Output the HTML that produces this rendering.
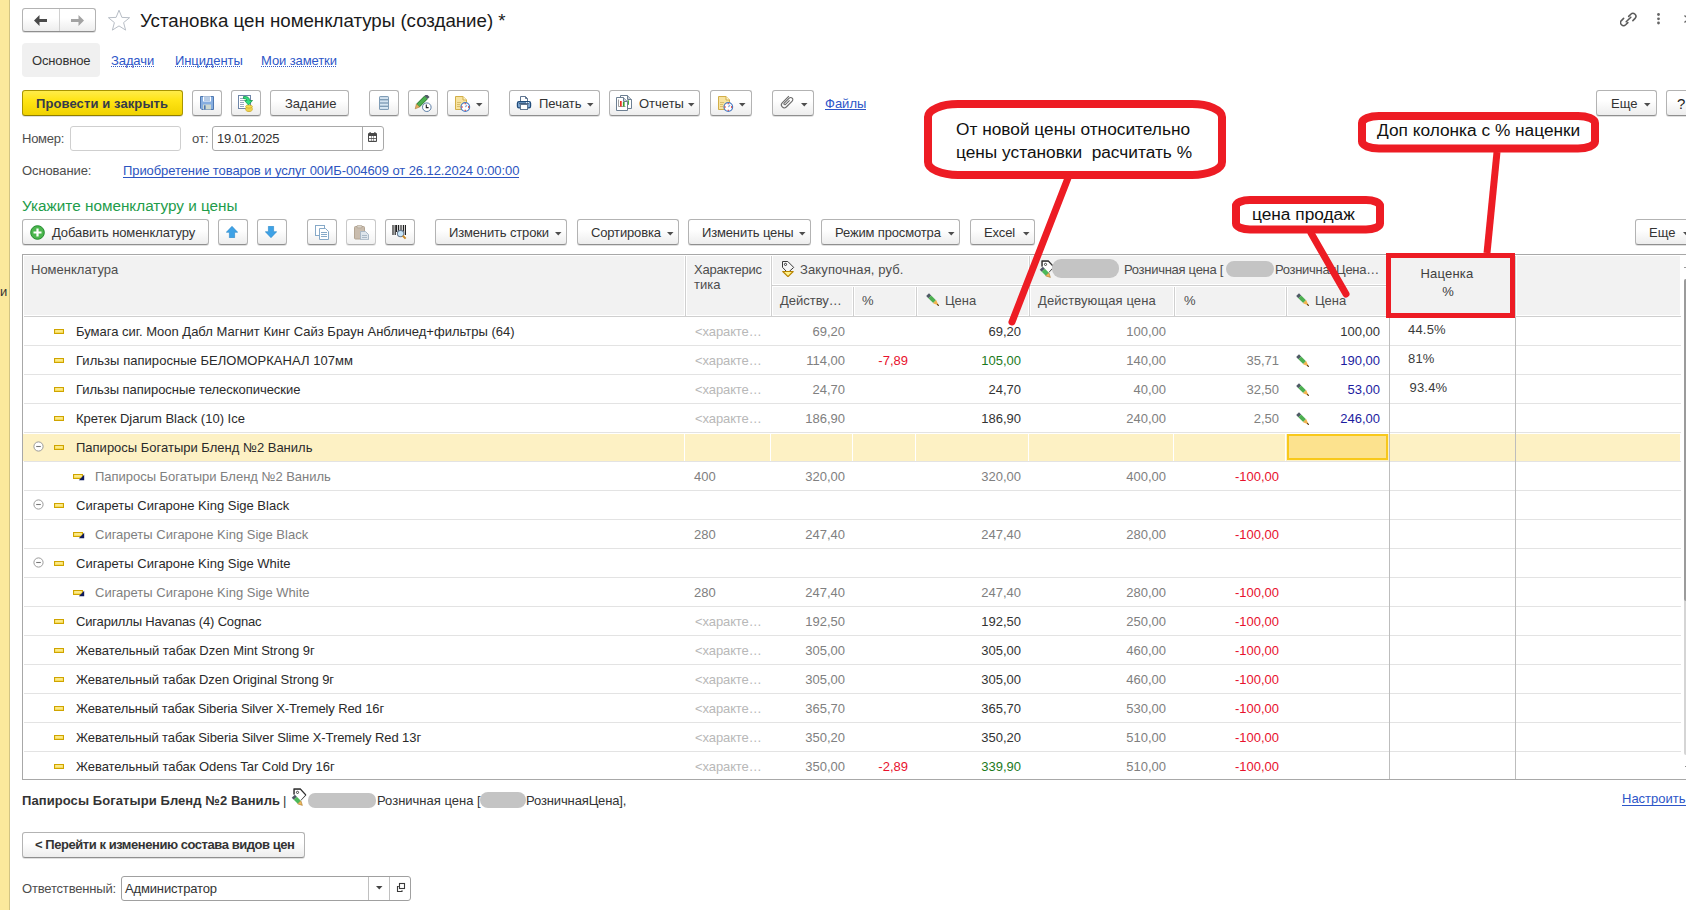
<!DOCTYPE html><html><head><meta charset="utf-8"><title>Установка цен номенклатуры</title>
<style>
*{margin:0;padding:0;box-sizing:border-box}
html,body{width:1686px;height:910px;overflow:hidden;background:#fff}
body{position:relative;font-family:"Liberation Sans", sans-serif;font-size:13px;color:#333}
.t{position:absolute;white-space:nowrap}
.btn{position:absolute;border:1px solid #b3b3b3;border-bottom-color:#8f8f8f;border-radius:3px;background:linear-gradient(to bottom,#ffffff 0%,#ffffff 40%,#ededed 100%);box-shadow:0 1px 0 rgba(0,0,0,.12)}
.lnk{color:#2d56c8}
</style></head><body>
<div style="position:absolute;left:0px;top:0px;width:9px;height:910px;background:#fbe99c"></div>
<div style="position:absolute;left:9px;top:0px;width:1px;height:910px;background:#d2c483"></div>
<div class="t" style="left:0px;top:282px;font-size:13px;color:#333;font-weight:400;line-height:20px;">и</div>
<div class="btn" style="left:22px;top:8px;width:74px;height:24px"></div>
<div style="position:absolute;left:59px;top:9px;width:1px;height:22px;background:#d0d0d0"></div>
<svg style="position:absolute;left:34px;top:15px" width="15" height="11" viewBox="0 0 15 11"><path d="M0 5.5L5.5 0V4H13V7H5.5V11Z" fill="#4a4a4a"/></svg>
<svg style="position:absolute;left:70px;top:15px" width="15" height="11" viewBox="0 0 15 11"><path d="M14 5.5L8.5 0V4H1V7H8.5V11Z" fill="#a3a3a3"/></svg>
<svg style="position:absolute;left:107px;top:9px" width="24" height="23" viewBox="0 0 24 23"><path d="M12 1.2L14.9 8.4L22.6 8.7L16.6 13.6L18.6 21.1L12 16.9L5.4 21.1L7.4 13.6L1.4 8.7L9.1 8.4Z" fill="none" stroke="#b8bec6" stroke-width="1"/></svg>
<div class="t" style="left:140px;top:11px;font-size:18.7px;color:#1a1a1a;font-weight:400;line-height:20px;">Установка цен номенклатуры (создание) *</div>
<svg style="position:absolute;left:1620px;top:11px" width="17" height="17" viewBox="0 0 16.5 16.5"><g fill="none" stroke="#5a5a5a" stroke-width="1.5" stroke-linecap="round"><path d="M8.4 5.2L10.5 3.1A2.9 2.9 0 0 1 14.6 7.2L12.5 9.3"/><path d="M7.6 11.3L5.5 13.4A2.9 2.9 0 0 1 1.4 9.3L3.5 7.2"/><path d="M6 10.5L10.5 6"/></g></svg>
<svg style="position:absolute;left:1655px;top:12px" width="7" height="16" viewBox="0 0 7 16"><circle cx="3.5" cy="2.5" r="1.4" fill="#666"/><circle cx="3.5" cy="6.8" r="1.4" fill="#666"/><circle cx="3.5" cy="11" r="1.4" fill="#666"/></svg>
<svg style="position:absolute;left:1684px;top:13px" width="2" height="12" viewBox="0 0 2 12"><path d="M0.5 2.5L2 4M0.5 9.5L2 8" stroke="#666" stroke-width="1.4"/></svg>
<div style="position:absolute;left:22px;top:43px;width:78px;height:34px;background:#f0f0f0;border-radius:4px"></div>
<div class="t" style="left:32px;top:51px;font-size:13px;color:#333;font-weight:400;line-height:20px;letter-spacing:-0.15px">Основное</div>
<div class="t" style="left:111px;top:51px;font-size:13px;color:#2d56c8;font-weight:400;line-height:20px;letter-spacing:-0.1px">Задачи</div>
<div style="position:absolute;left:111px;top:66px;width:44px;height:1px;background:repeating-linear-gradient(to right,#3a5fc8 0 1px,transparent 1px 2px)"></div>
<div class="t" style="left:175px;top:51px;font-size:13px;color:#2d56c8;font-weight:400;line-height:20px;letter-spacing:-0.1px">Инциденты</div>
<div style="position:absolute;left:175px;top:66px;width:66px;height:1px;background:repeating-linear-gradient(to right,#3a5fc8 0 1px,transparent 1px 2px)"></div>
<div class="t" style="left:261px;top:51px;font-size:13px;color:#2d56c8;font-weight:400;line-height:20px;letter-spacing:-0.1px">Мои заметки</div>
<div style="position:absolute;left:261px;top:66px;width:76px;height:1px;background:repeating-linear-gradient(to right,#3a5fc8 0 1px,transparent 1px 2px)"></div>
<div style="position:absolute;left:22px;top:90px;width:161px;height:26px;border:1px solid #a99500;border-bottom-color:#8f7e00;border-radius:3px;background:linear-gradient(to bottom,#ffec4a 0%,#ffe414 40%,#f0d200 100%);box-shadow:0 1px 0 rgba(0,0,0,.12)"></div>
<div class="t" style="left:36px;top:94px;font-size:13px;color:#363a4a;font-weight:700;line-height:20px;letter-spacing:0.1px">Провести и закрыть</div>
<div class="btn" style="left:192px;top:90px;width:30px;height:26px;"></div>
<svg style="position:absolute;left:200px;top:96px" width="14" height="14" viewBox="0 0 14 14"><path d="M0.5 0.5H13.5V13.5H1.8L0.5 12.2Z" fill="#86aee0" stroke="#4f78b0"/><rect x="3" y="0.5" width="8" height="5" fill="#fff"/><path d="M4 2H10M4 4H10" stroke="#6f98cc" stroke-width="1"/><rect x="3" y="8.5" width="8" height="5" fill="#cdd8d0"/><rect x="4" y="9.3" width="1.6" height="4.2" fill="#4f78b0"/></svg>
<div class="btn" style="left:231px;top:90px;width:30px;height:26px;"></div>
<svg style="position:absolute;left:237px;top:94px" width="18" height="18" viewBox="0 0 18 18"><rect x="1.5" y="1.5" width="12" height="13" fill="#fff" stroke="#6f86a8"/><path d="M3 4.5H8M3 6.5H7M3 8.5H7M3 10.5H7M3 12.5H7" stroke="#9aa8bf" stroke-width="1"/><ellipse cx="12" cy="15" rx="3.4" ry="2.6" fill="#e6c32e" stroke="#c09a10" stroke-width="0.6"/><path d="M8.8 14.2H15.2M8.8 16H15.2" stroke="#fff08a" stroke-width="0.7"/><ellipse cx="12" cy="12.6" rx="3.4" ry="1.6" fill="#f4dc50" stroke="#c09a10" stroke-width="0.6"/><path d="M6.5 2.5Q12.5 2 12.5 6.5H15.5L11.5 11L7.5 6.5H10Q10 4.5 6.5 4.5Z" fill="#2fe07e" stroke="#14944a" stroke-width="0.8"/></svg>
<div class="btn" style="left:270px;top:90px;width:79px;height:26px;"></div>
<div class="t" style="left:285px;top:94px;font-size:13px;color:#333;font-weight:400;line-height:20px;">Задание</div>
<div class="btn" style="left:369px;top:90px;width:30px;height:26px;"></div>
<svg style="position:absolute;left:379px;top:96px" width="10" height="14" viewBox="0 0 10 14"><rect x="0" y="0" width="10" height="14" rx="1.6" fill="#809db6"/><rect x="1" y="1.1" width="8" height="1.9" fill="#d3e3f0"/><rect x="1" y="4.4" width="8" height="1.9" fill="#d3e3f0"/><rect x="1" y="7.7" width="8" height="1.9" fill="#d6e6f2"/><rect x="1" y="11" width="8" height="1.9" fill="#d8e8f4"/></svg>
<div class="btn" style="left:408px;top:90px;width:30px;height:26px;"></div>
<svg style="position:absolute;left:414px;top:95px" width="18" height="18" viewBox="0 0 18 18"><path d="M4 10.5L12 2.5" stroke="#2f7a33" stroke-width="4.6"/><path d="M4 10.5L12 2.5" stroke="#4cb050" stroke-width="3.2"/><path d="M12 2.5L14 0.5" stroke="#4f5a66" stroke-width="4.4"/><path d="M2.4 8.9L5.6 12.1L1.2 13.8Z" fill="#e8b060" stroke="#9a6a20" stroke-width="0.5"/><circle cx="12.8" cy="12.2" r="4.3" fill="#fff" stroke="#5b7ea6" stroke-width="1"/><path d="M12.3 9.6V12.6H14.6" fill="none" stroke="#222" stroke-width="1.1"/></svg>
<div class="btn" style="left:447px;top:90px;width:42px;height:26px;"></div>
<svg style="position:absolute;left:453px;top:95px" width="18" height="18" viewBox="0 0 18 18"><path d="M2.5 1.5H10L13.5 5V14.5H2.5Z" fill="#f7e3a0" stroke="#d2ae48"/><path d="M10 1.5V5H13.5" fill="#fff6d0" stroke="#d2ae48"/><path d="M4 7.5H8M4 9.5H7M4 11.5H7" stroke="#d9bd6a"/><circle cx="12.3" cy="12" r="4.3" fill="#fff" stroke="#4a7cc4" stroke-width="1.2"/><path d="M12.3 8.2V9.3M12.3 14.7V15.8M8.5 12H9.6M15 12H16.1" stroke="#e02a2a" stroke-width="1.3"/><path d="M12.3 12L14 10" stroke="#8aaee0" stroke-width="1.2"/></svg>
<svg style="position:absolute;left:476px;top:103px" width="7" height="4" viewBox="0 0 7 4"><path d="M0 0H6.5L3.25 3.5Z" fill="#4d4d4d"/></svg>
<div class="btn" style="left:509px;top:90px;width:91px;height:26px;"></div>
<svg style="position:absolute;left:516px;top:95px" width="16" height="16" viewBox="0 0 16 16"><path d="M4.5 1.5H9.5L11.5 3.5V6.5H4.5Z" fill="#fff" stroke="#5f7590"/><path d="M9.5 1.5V3.5H11.5" fill="none" stroke="#5f7590"/><rect x="1.4" y="6.6" width="13.2" height="6.2" rx="1.6" fill="#7ba3cd" stroke="#1f4b7a" stroke-width="1.2"/><path d="M3 8.6H13" stroke="#3d5a7a"/><circle cx="10.6" cy="7.6" r="0.6" fill="#fff"/><circle cx="12.6" cy="7.6" r="0.6" fill="#fff"/><rect x="4.5" y="9.5" width="7" height="5" fill="#fff" stroke="#5f7590"/></svg>
<div class="t" style="left:539px;top:94px;font-size:13px;color:#333;font-weight:400;line-height:20px;">Печать</div>
<svg style="position:absolute;left:587px;top:103px" width="7" height="4" viewBox="0 0 7 4"><path d="M0 0H6.5L3.25 3.5Z" fill="#4d4d4d"/></svg>
<div class="btn" style="left:609px;top:90px;width:91px;height:26px;"></div>
<svg style="position:absolute;left:615px;top:94px" width="18" height="18" viewBox="0 0 18 18"><path d="M5.5 1.5H12.5L16.5 5.5V14.5H5.5Z" fill="#fff" stroke="#6d7f92"/><path d="M12.5 1.5V5.5H16.5" fill="#c8d0d8" stroke="#6d7f92"/><rect x="12.3" y="6.3" width="1.6" height="4.5" fill="#3aa030"/><path d="M1.5 3.5H8.5L12.5 7.5V16.5H1.5Z" fill="#fff" stroke="#6d7f92"/><path d="M8.5 3.5V7.5H12.5" fill="#c8d0d8" stroke="#6d7f92"/><path d="M3.5 5.5V12.5H10.5" fill="none" stroke="#888" stroke-width="0.8"/><rect x="5" y="7" width="1.7" height="5.5" fill="#e83020"/><rect x="7.9" y="8" width="1.7" height="4.5" fill="#3aa030"/></svg>
<div class="t" style="left:639px;top:94px;font-size:13px;color:#333;font-weight:400;line-height:20px;">Отчеты</div>
<svg style="position:absolute;left:688px;top:103px" width="7" height="4" viewBox="0 0 7 4"><path d="M0 0H6.5L3.25 3.5Z" fill="#4d4d4d"/></svg>
<div class="btn" style="left:710px;top:90px;width:42px;height:26px;"></div>
<svg style="position:absolute;left:716px;top:95px" width="18" height="18" viewBox="0 0 18 18"><path d="M2.5 1.5H10L13.5 5V14.5H2.5Z" fill="#f7e3a0" stroke="#d2ae48"/><path d="M10 1.5V5H13.5" fill="#fff6d0" stroke="#d2ae48"/><path d="M4 7.5H8M4 9.5H7M4 11.5H7" stroke="#d9bd6a"/><circle cx="12.3" cy="12" r="4.3" fill="#fff" stroke="#4a7cc4" stroke-width="1.2"/><path d="M12.3 8.2V9.3M12.3 14.7V15.8M8.5 12H9.6M15 12H16.1" stroke="#e02a2a" stroke-width="1.3"/><path d="M12.3 12L14 10" stroke="#8aaee0" stroke-width="1.2"/></svg>
<svg style="position:absolute;left:739px;top:103px" width="7" height="4" viewBox="0 0 7 4"><path d="M0 0H6.5L3.25 3.5Z" fill="#4d4d4d"/></svg>
<div class="btn" style="left:772px;top:90px;width:42px;height:26px;"></div>
<svg style="position:absolute;left:779px;top:94px" width="16" height="16" viewBox="0 0 16 16"><path d="M9.9 2.2L3.2 8.9A2.9 2.9 0 0 0 7.3 13L13.2 7.1A2.1 2.1 0 0 0 10.2 4.1L5 9.3A0.95 0.95 0 0 0 6.3 10.6L10.6 6.3" fill="none" stroke="#6a6a6a" stroke-width="1.1"/></svg>
<svg style="position:absolute;left:801px;top:103px" width="7" height="4" viewBox="0 0 7 4"><path d="M0 0H6.5L3.25 3.5Z" fill="#4d4d4d"/></svg>
<div class="t" style="left:825px;top:94px;font-size:13px;color:#2d56c8;font-weight:400;line-height:20px;">Файлы</div>
<div style="position:absolute;left:825px;top:109px;width:41px;height:1px;background:#2d56c8"></div>
<div class="btn" style="left:1596px;top:90px;width:61px;height:26px;"></div>
<div class="t" style="left:1611px;top:94px;font-size:13px;color:#333;font-weight:400;line-height:20px;">Еще</div>
<svg style="position:absolute;left:1644px;top:103px" width="7" height="4" viewBox="0 0 7 4"><path d="M0 0H6.5L3.25 3.5Z" fill="#4d4d4d"/></svg>
<div class="btn" style="left:1666px;top:90px;width:34px;height:26px;"></div>
<div class="t" style="left:1677px;top:94px;font-size:15px;color:#222;font-weight:400;line-height:20px;">?</div>
<div class="t" style="left:22px;top:129px;font-size:13px;color:#4d4d4d;font-weight:400;line-height:20px;letter-spacing:-0.25px">Номер:</div>
<div style="position:absolute;left:70px;top:126px;width:111px;height:25px;border:1px solid #cfcfcf;border-radius:3px;background:#fff"></div>
<div class="t" style="left:192px;top:129px;font-size:13px;color:#4d4d4d;font-weight:400;line-height:20px;">от:</div>
<div style="position:absolute;left:212px;top:126px;width:172px;height:25px;border:1px solid #a9a9a9;border-radius:3px;background:#fff"></div>
<div style="position:absolute;left:362px;top:127px;width:1px;height:23px;background:#a9a9a9"></div>
<div class="t" style="left:217px;top:129px;font-size:13px;color:#333;font-weight:400;line-height:20px;letter-spacing:-0.3px">19.01.2025</div>
<svg style="position:absolute;left:368px;top:132px" width="9" height="10" viewBox="0 0 9 10"><rect x="0" y="1" width="9" height="9" rx="1" fill="#4a4a4a"/><rect x="1.5" y="0" width="1.2" height="2.2" fill="#4a4a4a"/><rect x="6.3" y="0" width="1.2" height="2.2" fill="#4a4a4a"/><rect x="1" y="4" width="2" height="2" fill="#fff"/><rect x="3.5" y="4" width="2" height="2" fill="#fff"/><rect x="6" y="4" width="2" height="2" fill="#fff"/><rect x="1" y="6.8" width="2" height="2" fill="#fff"/><rect x="3.5" y="6.8" width="2" height="2" fill="#fff"/><rect x="6" y="6.8" width="2" height="2" fill="#fff"/></svg>
<div class="t" style="left:22px;top:161px;font-size:13px;color:#4d4d4d;font-weight:400;line-height:20px;letter-spacing:-0.1px">Основание:</div>
<div class="t" style="left:123px;top:161px;font-size:13px;color:#2d55c0;font-weight:400;line-height:20px;letter-spacing:-0.08px">Приобретение товаров и услуг 00ИБ-004609 от 26.12.2024 0:00:00</div>
<div style="position:absolute;left:123px;top:177px;width:396px;height:1px;background:#2d55c0"></div>
<div class="t" style="left:22px;top:196px;font-size:15.3px;color:#1e9c4a;font-weight:400;line-height:20px;letter-spacing:0">Укажите номенклатуру и цены</div>
<div class="btn" style="left:22px;top:219px;width:187px;height:26px;"></div>
<svg style="position:absolute;left:30px;top:225px" width="15" height="15" viewBox="0 0 15 15"><circle cx="7.5" cy="7.5" r="6.8" fill="#4cb64e" stroke="#1e8a2a" stroke-width="1"/><path d="M7.5 3.5V11.5M3.5 7.5H11.5" stroke="#fff" stroke-width="2.2"/></svg>
<div class="t" style="left:52px;top:223px;font-size:13px;color:#333;font-weight:400;line-height:20px;letter-spacing:-0.1px">Добавить номенклатуру</div>
<div class="btn" style="left:218px;top:219px;width:30px;height:26px;"></div>
<svg style="position:absolute;left:226px;top:226px" width="12" height="12" viewBox="0 0 12 12"><path d="M6 0.3L11.7 6.3H8.6V11.7H3.4V6.3H0.3Z" fill="#3ea2e6" stroke="#2a86c8" stroke-width="0.6"/></svg>
<div class="btn" style="left:257px;top:219px;width:30px;height:26px;"></div>
<svg style="position:absolute;left:265px;top:226px" width="12" height="12" viewBox="0 0 12 12"><path d="M6 11.7L11.7 5.7H8.6V0.3H3.4V5.7H0.3Z" fill="#3ea2e6" stroke="#2a86c8" stroke-width="0.6"/></svg>
<div class="btn" style="left:307px;top:219px;width:30px;height:26px;"></div>
<svg style="position:absolute;left:315px;top:225px" width="15" height="15" viewBox="0 0 15 15"><rect x="0.5" y="0.5" width="9" height="10" fill="#fff" stroke="#86a9c8"/><path d="M4.5 3.5H10.5L13.5 6.5V14.5H4.5Z" fill="#fff" stroke="#86a9c8"/><path d="M6 7.5H12M6 9.5H12M6 11.5H12" stroke="#86a9c8"/></svg>
<div class="btn" style="left:346px;top:219px;width:30px;height:26px;opacity:.7"></div>
<svg style="position:absolute;left:354px;top:225px" width="15" height="15" viewBox="0 0 15 15"><rect x="0.5" y="1.5" width="10" height="12.5" rx="1" fill="#c9bcad" stroke="#b3a593"/><rect x="3" y="0.3" width="5" height="2.6" rx="0.8" fill="#d9d2c8" stroke="#a89a88" stroke-width="0.6"/><path d="M6.5 6.5H11.5L14.5 9.5V14.7H6.5Z" fill="#dde5ec" stroke="#a9b8c6"/><path d="M8 10.5H13M8 12.5H13" stroke="#a9b8c6"/></svg>
<div class="btn" style="left:385px;top:219px;width:30px;height:26px;"></div>
<svg style="position:absolute;left:392px;top:225px" width="16" height="16" viewBox="0 0 16 16"><path d="M1 0V10M3.2 0V10M4.6 0V7M6.6 0V6M9 0V6M11.4 0V7M13.4 0V10" stroke="#222" stroke-width="1.2"/><circle cx="8.6" cy="8.6" r="3.2" fill="#c6e4f8" stroke="#6a7b8f" stroke-width="1.1"/><path d="M10.8 10.8L13.6 13.6" stroke="#c88a2a" stroke-width="2"/></svg>
<div class="btn" style="left:435px;top:219px;width:132px;height:26px;"></div>
<div class="t" style="left:449px;top:223px;font-size:13px;color:#333;font-weight:400;line-height:20px;letter-spacing:-0.15px">Изменить строки</div>
<svg style="position:absolute;left:555px;top:232px" width="7" height="4" viewBox="0 0 7 4"><path d="M0 0H6.5L3.25 3.5Z" fill="#4d4d4d"/></svg>
<div class="btn" style="left:577px;top:219px;width:102px;height:26px;"></div>
<div class="t" style="left:591px;top:223px;font-size:13px;color:#333;font-weight:400;line-height:20px;letter-spacing:-0.15px">Сортировка</div>
<svg style="position:absolute;left:667px;top:232px" width="7" height="4" viewBox="0 0 7 4"><path d="M0 0H6.5L3.25 3.5Z" fill="#4d4d4d"/></svg>
<div class="btn" style="left:688px;top:219px;width:123px;height:26px;"></div>
<div class="t" style="left:702px;top:223px;font-size:13px;color:#333;font-weight:400;line-height:20px;letter-spacing:-0.15px">Изменить цены</div>
<svg style="position:absolute;left:799px;top:232px" width="7" height="4" viewBox="0 0 7 4"><path d="M0 0H6.5L3.25 3.5Z" fill="#4d4d4d"/></svg>
<div class="btn" style="left:821px;top:219px;width:139px;height:26px;"></div>
<div class="t" style="left:835px;top:223px;font-size:13px;color:#333;font-weight:400;line-height:20px;letter-spacing:-0.15px">Режим просмотра</div>
<svg style="position:absolute;left:948px;top:232px" width="7" height="4" viewBox="0 0 7 4"><path d="M0 0H6.5L3.25 3.5Z" fill="#4d4d4d"/></svg>
<div class="btn" style="left:970px;top:219px;width:65px;height:26px;"></div>
<div class="t" style="left:984px;top:223px;font-size:13px;color:#333;font-weight:400;line-height:20px;letter-spacing:-0.15px">Excel</div>
<svg style="position:absolute;left:1023px;top:232px" width="7" height="4" viewBox="0 0 7 4"><path d="M0 0H6.5L3.25 3.5Z" fill="#4d4d4d"/></svg>
<div class="btn" style="left:1635px;top:219px;width:65px;height:26px;"></div>
<div class="t" style="left:1649px;top:223px;font-size:13px;color:#333;font-weight:400;line-height:20px;">Еще</div>
<svg style="position:absolute;left:1683px;top:232px" width="7" height="4" viewBox="0 0 7 4"><path d="M0 0H6.5L3.25 3.5Z" fill="#4d4d4d"/></svg>
<div style="position:absolute;left:22px;top:254px;width:1px;height:526px;background:#a8a8a8"></div>
<div style="position:absolute;left:22px;top:254px;width:1664px;height:1px;background:#a8a8a8"></div>
<div style="position:absolute;left:22px;top:779px;width:1664px;height:1px;background:#a8a8a8"></div>
<div style="position:absolute;left:24px;top:256px;width:1656px;height:59px;background:#f2f2f2"></div>
<div style="position:absolute;left:24px;top:316px;width:1657px;height:1px;background:#cfcfcf"></div>
<div style="position:absolute;left:684px;top:256px;width:3px;height:59px;background:#fff"></div>
<div style="position:absolute;left:685px;top:256px;width:1px;height:60px;background:#d0d0d0"></div>
<div style="position:absolute;left:770px;top:256px;width:3px;height:59px;background:#fff"></div>
<div style="position:absolute;left:771px;top:256px;width:1px;height:60px;background:#d0d0d0"></div>
<div style="position:absolute;left:1028px;top:256px;width:3px;height:59px;background:#fff"></div>
<div style="position:absolute;left:1029px;top:256px;width:1px;height:60px;background:#d0d0d0"></div>
<div style="position:absolute;left:1388px;top:256px;width:3px;height:59px;background:#fff"></div>
<div style="position:absolute;left:1389px;top:256px;width:1px;height:60px;background:#d0d0d0"></div>
<div style="position:absolute;left:1514px;top:256px;width:3px;height:59px;background:#fff"></div>
<div style="position:absolute;left:1515px;top:256px;width:1px;height:60px;background:#d0d0d0"></div>
<div style="position:absolute;left:852px;top:286px;width:3px;height:29px;background:#fff"></div>
<div style="position:absolute;left:853px;top:286px;width:1px;height:30px;background:#d0d0d0"></div>
<div style="position:absolute;left:915px;top:286px;width:3px;height:29px;background:#fff"></div>
<div style="position:absolute;left:916px;top:286px;width:1px;height:30px;background:#d0d0d0"></div>
<div style="position:absolute;left:1173px;top:286px;width:3px;height:29px;background:#fff"></div>
<div style="position:absolute;left:1174px;top:286px;width:1px;height:30px;background:#d0d0d0"></div>
<div style="position:absolute;left:1285px;top:286px;width:3px;height:29px;background:#fff"></div>
<div style="position:absolute;left:1286px;top:286px;width:1px;height:30px;background:#d0d0d0"></div>
<div style="position:absolute;left:772px;top:284px;width:257px;height:3px;background:#fff"></div>
<div style="position:absolute;left:772px;top:285px;width:257px;height:1px;background:#d0d0d0"></div>
<div style="position:absolute;left:1030px;top:284px;width:359px;height:3px;background:#fff"></div>
<div style="position:absolute;left:1030px;top:285px;width:359px;height:1px;background:#d0d0d0"></div>
<div class="t" style="left:31px;top:260px;font-size:13px;color:#4d4d4d;font-weight:400;line-height:20px;">Номенклатура</div>
<div class="t" style="left:694px;top:260px;font-size:13px;color:#4d4d4d;font-weight:400;line-height:20px;letter-spacing:-0.25px">Характерис</div>
<div class="t" style="left:694px;top:275px;font-size:13px;color:#4d4d4d;font-weight:400;line-height:20px;">тика</div>
<svg style="position:absolute;left:781px;top:260px" width="15" height="17" viewBox="0 0 15 17"><path d="M1.5 1.5H6.8L12.7 7.4L8.2 11.5H5.5L1.5 7.3Z" fill="#f6f6f6" stroke="#3a3a3a" stroke-width="1"/><circle cx="4.5" cy="4.4" r="1.1" fill="none" stroke="#333" stroke-width="1"/><path d="M1.8 11.5H12.2L7 16.6Z" fill="#fff28a" stroke="#b88400" stroke-width="1.2" stroke-linejoin="round"/></svg>
<div class="t" style="left:800px;top:260px;font-size:13px;color:#4d4d4d;font-weight:400;line-height:20px;letter-spacing:0.12px">Закупочная, руб.</div>
<div class="t" style="left:780px;top:291px;font-size:13px;color:#4d4d4d;font-weight:400;line-height:20px;">Действу…</div>
<div class="t" style="left:862px;top:291px;font-size:13px;color:#4d4d4d;font-weight:400;line-height:20px;">%</div>
<svg style="position:absolute;left:926px;top:293px" width="13" height="13" viewBox="0 0 13 13"><path d="M1.6 1.6L3.8 3.8" stroke="#4f5a66" stroke-width="4"/><path d="M3.8 3.8L8.6 8.6" stroke="#4caf50" stroke-width="4"/><path d="M10.2 7.0L7.0 10.2L12.6 12.6Z" fill="#f2b24c"/><path d="M11.2 11.2L12.8 12.8" stroke="#5a3a10" stroke-width="1.2"/></svg>
<div class="t" style="left:945px;top:291px;font-size:13px;color:#4d4d4d;font-weight:400;line-height:20px;">Цена</div>
<svg style="position:absolute;left:1039px;top:260px" width="16" height="18" viewBox="0 0 16 18"><path d="M3.1 6.5V1.1H9.3L14.7 6.9L10 11.8" fill="#fff" stroke="#333" stroke-width="1.1"/><path d="M3.6 6.5L9.6 12.3L14.2 7L9.1 1.6H3.6Z" fill="#fff"/><path d="M3.1 6.5V1.1H9.3L14.7 6.9" fill="none" stroke="#333" stroke-width="1.1"/><circle cx="6.5" cy="4.4" r="1.1" fill="none" stroke="#333" stroke-width="0.9"/><path d="M2.3 8.3L4.3 10.3" stroke="#4f5a66" stroke-width="4.4"/><path d="M4.3 10.3L8.3 14.3" stroke="#4cb85a" stroke-width="4.4"/><path d="M9.9 12.7L6.7 15.9L11.4 17.4Z" fill="#f0b85a" stroke="#9a6a20" stroke-width="0.5"/></svg>
<div style="position:absolute;left:1052px;top:259px;width:67px;height:19px;background:#c4c4c4;border-radius:9px"></div>
<div class="t" style="left:1124px;top:260px;font-size:13px;color:#4d4d4d;font-weight:400;line-height:20px;letter-spacing:-0.28px">Розничная цена [</div>
<div style="position:absolute;left:1226px;top:261px;width:48px;height:16px;background:#c4c4c4;border-radius:8px"></div>
<div class="t" style="left:1275px;top:260px;font-size:13px;color:#4d4d4d;font-weight:400;line-height:20px;letter-spacing:-0.3px">РозничнаяЦена…</div>
<div class="t" style="left:1038px;top:291px;font-size:13px;color:#4d4d4d;font-weight:400;line-height:20px;letter-spacing:0.1px">Действующая цена</div>
<div class="t" style="left:1184px;top:291px;font-size:13px;color:#4d4d4d;font-weight:400;line-height:20px;">%</div>
<svg style="position:absolute;left:1296px;top:293px" width="13" height="13" viewBox="0 0 13 13"><path d="M1.6 1.6L3.8 3.8" stroke="#4f5a66" stroke-width="4"/><path d="M3.8 3.8L8.6 8.6" stroke="#4caf50" stroke-width="4"/><path d="M10.2 7.0L7.0 10.2L12.6 12.6Z" fill="#f2b24c"/><path d="M11.2 11.2L12.8 12.8" stroke="#5a3a10" stroke-width="1.2"/></svg>
<div class="t" style="left:1315px;top:291px;font-size:13px;color:#4d4d4d;font-weight:400;line-height:20px;">Цена</div>
<div class="t" style="left:1147px;width:600px;text-align:center;top:264px;font-size:13px;color:#404040;font-weight:400;line-height:20px;letter-spacing:0.2px">Наценка</div>
<div class="t" style="left:1148px;width:600px;text-align:center;top:282px;font-size:13px;color:#404040;font-weight:400;line-height:20px;">%</div>
<svg style="position:absolute;left:54px;top:329px" width="10" height="5" viewBox="0 0 10 5"><rect x="0.5" y="0.5" width="9" height="4" fill="#f7dc5a" stroke="#cfa400" stroke-width="1"/><rect x="1.5" y="1.5" width="7" height="1" fill="#fff6b8"/></svg>
<div class="t" style="left:76px;top:322px;font-size:13px;color:#2a2a2a;font-weight:400;line-height:20px;letter-spacing:0px">Бумага сиг. Moon Дабл Магнит Кинг Сайз Браун Анбличед+фильтры (64)</div>
<div class="t" style="left:695px;top:322px;font-size:13px;color:#b8b8b8;font-weight:400;line-height:20px;letter-spacing:-0.1px">&lt;характе…</div>
<div class="t" style="left:245px;width:600px;text-align:right;top:322px;font-size:13px;color:#808080;font-weight:400;line-height:20px;">69,20</div>
<div class="t" style="left:421px;width:600px;text-align:right;top:322px;font-size:13px;color:#333;font-weight:400;line-height:20px;">69,20</div>
<div class="t" style="left:566px;width:600px;text-align:right;top:322px;font-size:13px;color:#808080;font-weight:400;line-height:20px;">100,00</div>
<div class="t" style="left:780px;width:600px;text-align:right;top:322px;font-size:13px;color:#333;font-weight:400;line-height:20px;">100,00</div>
<div class="t" style="left:1408px;top:320px;font-size:13px;color:#3a3a3a;font-weight:400;line-height:20px;letter-spacing:0.2px">44.5%</div>
<div style="position:absolute;left:24px;top:345px;width:1657px;height:1px;background:#e3e3e3"></div>
<svg style="position:absolute;left:54px;top:358px" width="10" height="5" viewBox="0 0 10 5"><rect x="0.5" y="0.5" width="9" height="4" fill="#f7dc5a" stroke="#cfa400" stroke-width="1"/><rect x="1.5" y="1.5" width="7" height="1" fill="#fff6b8"/></svg>
<div class="t" style="left:76px;top:351px;font-size:13px;color:#2a2a2a;font-weight:400;line-height:20px;letter-spacing:0.04px">Гильзы папиросные БЕЛОМОРКАНАЛ 107мм</div>
<div class="t" style="left:695px;top:351px;font-size:13px;color:#b8b8b8;font-weight:400;line-height:20px;letter-spacing:-0.1px">&lt;характе…</div>
<div class="t" style="left:245px;width:600px;text-align:right;top:351px;font-size:13px;color:#808080;font-weight:400;line-height:20px;">114,00</div>
<div class="t" style="left:308px;width:600px;text-align:right;top:351px;font-size:13px;color:#e8112d;font-weight:400;line-height:20px;">-7,89</div>
<div class="t" style="left:421px;width:600px;text-align:right;top:351px;font-size:13px;color:#1c7a1c;font-weight:400;line-height:20px;">105,00</div>
<div class="t" style="left:566px;width:600px;text-align:right;top:351px;font-size:13px;color:#808080;font-weight:400;line-height:20px;">140,00</div>
<div class="t" style="left:679px;width:600px;text-align:right;top:351px;font-size:13px;color:#808080;font-weight:400;line-height:20px;">35,71</div>
<svg style="position:absolute;left:1296px;top:354px" width="13" height="13" viewBox="0 0 13 13"><path d="M1.6 1.6L3.8 3.8" stroke="#4f5a66" stroke-width="4"/><path d="M3.8 3.8L8.6 8.6" stroke="#4caf50" stroke-width="4"/><path d="M10.2 7.0L7.0 10.2L12.6 12.6Z" fill="#f2b24c"/><path d="M11.2 11.2L12.8 12.8" stroke="#5a3a10" stroke-width="1.2"/></svg>
<div class="t" style="left:780px;width:600px;text-align:right;top:351px;font-size:13px;color:#1c1ca0;font-weight:400;line-height:20px;">190,00</div>
<div class="t" style="left:1408px;top:349px;font-size:13px;color:#3a3a3a;font-weight:400;line-height:20px;letter-spacing:0.2px">81%</div>
<div style="position:absolute;left:24px;top:374px;width:1657px;height:1px;background:#e3e3e3"></div>
<svg style="position:absolute;left:54px;top:387px" width="10" height="5" viewBox="0 0 10 5"><rect x="0.5" y="0.5" width="9" height="4" fill="#f7dc5a" stroke="#cfa400" stroke-width="1"/><rect x="1.5" y="1.5" width="7" height="1" fill="#fff6b8"/></svg>
<div class="t" style="left:76px;top:380px;font-size:13px;color:#2a2a2a;font-weight:400;line-height:20px;letter-spacing:-0.04px">Гильзы папиросные телескопические</div>
<div class="t" style="left:695px;top:380px;font-size:13px;color:#b8b8b8;font-weight:400;line-height:20px;letter-spacing:-0.1px">&lt;характе…</div>
<div class="t" style="left:245px;width:600px;text-align:right;top:380px;font-size:13px;color:#808080;font-weight:400;line-height:20px;">24,70</div>
<div class="t" style="left:421px;width:600px;text-align:right;top:380px;font-size:13px;color:#333;font-weight:400;line-height:20px;">24,70</div>
<div class="t" style="left:566px;width:600px;text-align:right;top:380px;font-size:13px;color:#808080;font-weight:400;line-height:20px;">40,00</div>
<div class="t" style="left:679px;width:600px;text-align:right;top:380px;font-size:13px;color:#808080;font-weight:400;line-height:20px;">32,50</div>
<svg style="position:absolute;left:1296px;top:383px" width="13" height="13" viewBox="0 0 13 13"><path d="M1.6 1.6L3.8 3.8" stroke="#4f5a66" stroke-width="4"/><path d="M3.8 3.8L8.6 8.6" stroke="#4caf50" stroke-width="4"/><path d="M10.2 7.0L7.0 10.2L12.6 12.6Z" fill="#f2b24c"/><path d="M11.2 11.2L12.8 12.8" stroke="#5a3a10" stroke-width="1.2"/></svg>
<div class="t" style="left:780px;width:600px;text-align:right;top:380px;font-size:13px;color:#1c1ca0;font-weight:400;line-height:20px;">53,00</div>
<div class="t" style="left:1409.5px;top:378px;font-size:13px;color:#3a3a3a;font-weight:400;line-height:20px;letter-spacing:0.2px">93.4%</div>
<div style="position:absolute;left:24px;top:403px;width:1657px;height:1px;background:#e3e3e3"></div>
<svg style="position:absolute;left:54px;top:416px" width="10" height="5" viewBox="0 0 10 5"><rect x="0.5" y="0.5" width="9" height="4" fill="#f7dc5a" stroke="#cfa400" stroke-width="1"/><rect x="1.5" y="1.5" width="7" height="1" fill="#fff6b8"/></svg>
<div class="t" style="left:76px;top:409px;font-size:13px;color:#2a2a2a;font-weight:400;line-height:20px;letter-spacing:0px">Кретек Djarum Black (10) Ice</div>
<div class="t" style="left:695px;top:409px;font-size:13px;color:#b8b8b8;font-weight:400;line-height:20px;letter-spacing:-0.1px">&lt;характе…</div>
<div class="t" style="left:245px;width:600px;text-align:right;top:409px;font-size:13px;color:#808080;font-weight:400;line-height:20px;">186,90</div>
<div class="t" style="left:421px;width:600px;text-align:right;top:409px;font-size:13px;color:#333;font-weight:400;line-height:20px;">186,90</div>
<div class="t" style="left:566px;width:600px;text-align:right;top:409px;font-size:13px;color:#808080;font-weight:400;line-height:20px;">240,00</div>
<div class="t" style="left:679px;width:600px;text-align:right;top:409px;font-size:13px;color:#808080;font-weight:400;line-height:20px;">2,50</div>
<svg style="position:absolute;left:1296px;top:412px" width="13" height="13" viewBox="0 0 13 13"><path d="M1.6 1.6L3.8 3.8" stroke="#4f5a66" stroke-width="4"/><path d="M3.8 3.8L8.6 8.6" stroke="#4caf50" stroke-width="4"/><path d="M10.2 7.0L7.0 10.2L12.6 12.6Z" fill="#f2b24c"/><path d="M11.2 11.2L12.8 12.8" stroke="#5a3a10" stroke-width="1.2"/></svg>
<div class="t" style="left:780px;width:600px;text-align:right;top:409px;font-size:13px;color:#1c1ca0;font-weight:400;line-height:20px;">246,00</div>
<div style="position:absolute;left:24px;top:432px;width:1657px;height:1px;background:#e3e3e3"></div>
<div style="position:absolute;left:23px;top:434px;width:661px;height:27px;background:#fdf1c4"></div>
<div style="position:absolute;left:685px;top:434px;width:85px;height:27px;background:#fdf1c4"></div>
<div style="position:absolute;left:771px;top:434px;width:81px;height:27px;background:#fdf1c4"></div>
<div style="position:absolute;left:853px;top:434px;width:62px;height:27px;background:#fdf1c4"></div>
<div style="position:absolute;left:916px;top:434px;width:112px;height:27px;background:#fdf1c4"></div>
<div style="position:absolute;left:1029px;top:434px;width:144px;height:27px;background:#fdf1c4"></div>
<div style="position:absolute;left:1174px;top:434px;width:111px;height:27px;background:#fdf1c4"></div>
<div style="position:absolute;left:1286px;top:434px;width:394px;height:27px;background:#fdf1c4"></div>
<div style="position:absolute;left:1287px;top:434px;width:101px;height:26px;background:#fce28e;border:2px solid #f8c81a"></div>
<svg style="position:absolute;left:33px;top:441px" width="11" height="11" viewBox="0 0 11 11"><circle cx="5.5" cy="5.5" r="4.6" fill="#fff" stroke="#9a9a9a" stroke-width="1"/><path d="M3.2 5.5H7.8" stroke="#777" stroke-width="1.1"/></svg>
<svg style="position:absolute;left:54px;top:445px" width="10" height="5" viewBox="0 0 10 5"><rect x="0.5" y="0.5" width="9" height="4" fill="#f7dc5a" stroke="#cfa400" stroke-width="1"/><rect x="1.5" y="1.5" width="7" height="1" fill="#fff6b8"/></svg>
<div class="t" style="left:76px;top:438px;font-size:13px;color:#2a2a2a;font-weight:400;line-height:20px;letter-spacing:0px">Папиросы Богатыри Бленд №2 Ваниль</div>
<div style="position:absolute;left:24px;top:461px;width:1657px;height:1px;background:#e3e3e3"></div>
<svg style="position:absolute;left:73px;top:474px" width="12" height="7" viewBox="0 0 12 7"><rect x="0.5" y="0.5" width="9" height="4" fill="#f7dc5a" stroke="#cfa400" stroke-width="1"/><rect x="1.5" y="1.5" width="7" height="1" fill="#fff6b8"/><path d="M11.2 0.8V6.2H5.8Z" fill="#0f1a5c"/></svg>
<div class="t" style="left:95px;top:467px;font-size:13px;color:#808080;font-weight:400;line-height:20px;letter-spacing:-0.02px">Папиросы Богатыри Бленд №2 Ваниль</div>
<div class="t" style="left:694px;top:467px;font-size:13px;color:#808080;font-weight:400;line-height:20px;">400</div>
<div class="t" style="left:245px;width:600px;text-align:right;top:467px;font-size:13px;color:#808080;font-weight:400;line-height:20px;">320,00</div>
<div class="t" style="left:421px;width:600px;text-align:right;top:467px;font-size:13px;color:#808080;font-weight:400;line-height:20px;">320,00</div>
<div class="t" style="left:566px;width:600px;text-align:right;top:467px;font-size:13px;color:#808080;font-weight:400;line-height:20px;">400,00</div>
<div class="t" style="left:679px;width:600px;text-align:right;top:467px;font-size:13px;color:#e8112d;font-weight:400;line-height:20px;">-100,00</div>
<div style="position:absolute;left:24px;top:490px;width:1657px;height:1px;background:#e3e3e3"></div>
<svg style="position:absolute;left:33px;top:499px" width="11" height="11" viewBox="0 0 11 11"><circle cx="5.5" cy="5.5" r="4.6" fill="#fff" stroke="#9a9a9a" stroke-width="1"/><path d="M3.2 5.5H7.8" stroke="#777" stroke-width="1.1"/></svg>
<svg style="position:absolute;left:54px;top:503px" width="10" height="5" viewBox="0 0 10 5"><rect x="0.5" y="0.5" width="9" height="4" fill="#f7dc5a" stroke="#cfa400" stroke-width="1"/><rect x="1.5" y="1.5" width="7" height="1" fill="#fff6b8"/></svg>
<div class="t" style="left:76px;top:496px;font-size:13px;color:#2a2a2a;font-weight:400;line-height:20px;letter-spacing:0px">Сигареты Сигароне King Sige Black</div>
<div style="position:absolute;left:24px;top:519px;width:1657px;height:1px;background:#e3e3e3"></div>
<svg style="position:absolute;left:73px;top:532px" width="12" height="7" viewBox="0 0 12 7"><rect x="0.5" y="0.5" width="9" height="4" fill="#f7dc5a" stroke="#cfa400" stroke-width="1"/><rect x="1.5" y="1.5" width="7" height="1" fill="#fff6b8"/><path d="M11.2 0.8V6.2H5.8Z" fill="#0f1a5c"/></svg>
<div class="t" style="left:95px;top:525px;font-size:13px;color:#808080;font-weight:400;line-height:20px;letter-spacing:0px">Сигареты Сигароне King Sige Black</div>
<div class="t" style="left:694px;top:525px;font-size:13px;color:#808080;font-weight:400;line-height:20px;">280</div>
<div class="t" style="left:245px;width:600px;text-align:right;top:525px;font-size:13px;color:#808080;font-weight:400;line-height:20px;">247,40</div>
<div class="t" style="left:421px;width:600px;text-align:right;top:525px;font-size:13px;color:#808080;font-weight:400;line-height:20px;">247,40</div>
<div class="t" style="left:566px;width:600px;text-align:right;top:525px;font-size:13px;color:#808080;font-weight:400;line-height:20px;">280,00</div>
<div class="t" style="left:679px;width:600px;text-align:right;top:525px;font-size:13px;color:#e8112d;font-weight:400;line-height:20px;">-100,00</div>
<div style="position:absolute;left:24px;top:548px;width:1657px;height:1px;background:#e3e3e3"></div>
<svg style="position:absolute;left:33px;top:557px" width="11" height="11" viewBox="0 0 11 11"><circle cx="5.5" cy="5.5" r="4.6" fill="#fff" stroke="#9a9a9a" stroke-width="1"/><path d="M3.2 5.5H7.8" stroke="#777" stroke-width="1.1"/></svg>
<svg style="position:absolute;left:54px;top:561px" width="10" height="5" viewBox="0 0 10 5"><rect x="0.5" y="0.5" width="9" height="4" fill="#f7dc5a" stroke="#cfa400" stroke-width="1"/><rect x="1.5" y="1.5" width="7" height="1" fill="#fff6b8"/></svg>
<div class="t" style="left:76px;top:554px;font-size:13px;color:#2a2a2a;font-weight:400;line-height:20px;letter-spacing:0px">Сигареты Сигароне King Sige White</div>
<div style="position:absolute;left:24px;top:577px;width:1657px;height:1px;background:#e3e3e3"></div>
<svg style="position:absolute;left:73px;top:590px" width="12" height="7" viewBox="0 0 12 7"><rect x="0.5" y="0.5" width="9" height="4" fill="#f7dc5a" stroke="#cfa400" stroke-width="1"/><rect x="1.5" y="1.5" width="7" height="1" fill="#fff6b8"/><path d="M11.2 0.8V6.2H5.8Z" fill="#0f1a5c"/></svg>
<div class="t" style="left:95px;top:583px;font-size:13px;color:#808080;font-weight:400;line-height:20px;letter-spacing:0px">Сигареты Сигароне King Sige White</div>
<div class="t" style="left:694px;top:583px;font-size:13px;color:#808080;font-weight:400;line-height:20px;">280</div>
<div class="t" style="left:245px;width:600px;text-align:right;top:583px;font-size:13px;color:#808080;font-weight:400;line-height:20px;">247,40</div>
<div class="t" style="left:421px;width:600px;text-align:right;top:583px;font-size:13px;color:#808080;font-weight:400;line-height:20px;">247,40</div>
<div class="t" style="left:566px;width:600px;text-align:right;top:583px;font-size:13px;color:#808080;font-weight:400;line-height:20px;">280,00</div>
<div class="t" style="left:679px;width:600px;text-align:right;top:583px;font-size:13px;color:#e8112d;font-weight:400;line-height:20px;">-100,00</div>
<div style="position:absolute;left:24px;top:606px;width:1657px;height:1px;background:#e3e3e3"></div>
<svg style="position:absolute;left:54px;top:619px" width="10" height="5" viewBox="0 0 10 5"><rect x="0.5" y="0.5" width="9" height="4" fill="#f7dc5a" stroke="#cfa400" stroke-width="1"/><rect x="1.5" y="1.5" width="7" height="1" fill="#fff6b8"/></svg>
<div class="t" style="left:76px;top:612px;font-size:13px;color:#2a2a2a;font-weight:400;line-height:20px;letter-spacing:-0.17px">Сигариллы Havanas (4) Cognac</div>
<div class="t" style="left:695px;top:612px;font-size:13px;color:#b8b8b8;font-weight:400;line-height:20px;letter-spacing:-0.1px">&lt;характе…</div>
<div class="t" style="left:245px;width:600px;text-align:right;top:612px;font-size:13px;color:#808080;font-weight:400;line-height:20px;">192,50</div>
<div class="t" style="left:421px;width:600px;text-align:right;top:612px;font-size:13px;color:#333;font-weight:400;line-height:20px;">192,50</div>
<div class="t" style="left:566px;width:600px;text-align:right;top:612px;font-size:13px;color:#808080;font-weight:400;line-height:20px;">250,00</div>
<div class="t" style="left:679px;width:600px;text-align:right;top:612px;font-size:13px;color:#e8112d;font-weight:400;line-height:20px;">-100,00</div>
<div style="position:absolute;left:24px;top:635px;width:1657px;height:1px;background:#e3e3e3"></div>
<svg style="position:absolute;left:54px;top:648px" width="10" height="5" viewBox="0 0 10 5"><rect x="0.5" y="0.5" width="9" height="4" fill="#f7dc5a" stroke="#cfa400" stroke-width="1"/><rect x="1.5" y="1.5" width="7" height="1" fill="#fff6b8"/></svg>
<div class="t" style="left:76px;top:641px;font-size:13px;color:#2a2a2a;font-weight:400;line-height:20px;letter-spacing:-0.03px">Жевательный табак Dzen Mint Strong 9г</div>
<div class="t" style="left:695px;top:641px;font-size:13px;color:#b8b8b8;font-weight:400;line-height:20px;letter-spacing:-0.1px">&lt;характе…</div>
<div class="t" style="left:245px;width:600px;text-align:right;top:641px;font-size:13px;color:#808080;font-weight:400;line-height:20px;">305,00</div>
<div class="t" style="left:421px;width:600px;text-align:right;top:641px;font-size:13px;color:#333;font-weight:400;line-height:20px;">305,00</div>
<div class="t" style="left:566px;width:600px;text-align:right;top:641px;font-size:13px;color:#808080;font-weight:400;line-height:20px;">460,00</div>
<div class="t" style="left:679px;width:600px;text-align:right;top:641px;font-size:13px;color:#e8112d;font-weight:400;line-height:20px;">-100,00</div>
<div style="position:absolute;left:24px;top:664px;width:1657px;height:1px;background:#e3e3e3"></div>
<svg style="position:absolute;left:54px;top:677px" width="10" height="5" viewBox="0 0 10 5"><rect x="0.5" y="0.5" width="9" height="4" fill="#f7dc5a" stroke="#cfa400" stroke-width="1"/><rect x="1.5" y="1.5" width="7" height="1" fill="#fff6b8"/></svg>
<div class="t" style="left:76px;top:670px;font-size:13px;color:#2a2a2a;font-weight:400;line-height:20px;letter-spacing:-0.05px">Жевательный табак Dzen Original Strong 9г</div>
<div class="t" style="left:695px;top:670px;font-size:13px;color:#b8b8b8;font-weight:400;line-height:20px;letter-spacing:-0.1px">&lt;характе…</div>
<div class="t" style="left:245px;width:600px;text-align:right;top:670px;font-size:13px;color:#808080;font-weight:400;line-height:20px;">305,00</div>
<div class="t" style="left:421px;width:600px;text-align:right;top:670px;font-size:13px;color:#333;font-weight:400;line-height:20px;">305,00</div>
<div class="t" style="left:566px;width:600px;text-align:right;top:670px;font-size:13px;color:#808080;font-weight:400;line-height:20px;">460,00</div>
<div class="t" style="left:679px;width:600px;text-align:right;top:670px;font-size:13px;color:#e8112d;font-weight:400;line-height:20px;">-100,00</div>
<div style="position:absolute;left:24px;top:693px;width:1657px;height:1px;background:#e3e3e3"></div>
<svg style="position:absolute;left:54px;top:706px" width="10" height="5" viewBox="0 0 10 5"><rect x="0.5" y="0.5" width="9" height="4" fill="#f7dc5a" stroke="#cfa400" stroke-width="1"/><rect x="1.5" y="1.5" width="7" height="1" fill="#fff6b8"/></svg>
<div class="t" style="left:76px;top:699px;font-size:13px;color:#2a2a2a;font-weight:400;line-height:20px;letter-spacing:-0.115px">Жевательный табак Siberia Silver X-Tremely Red 16г</div>
<div class="t" style="left:695px;top:699px;font-size:13px;color:#b8b8b8;font-weight:400;line-height:20px;letter-spacing:-0.1px">&lt;характе…</div>
<div class="t" style="left:245px;width:600px;text-align:right;top:699px;font-size:13px;color:#808080;font-weight:400;line-height:20px;">365,70</div>
<div class="t" style="left:421px;width:600px;text-align:right;top:699px;font-size:13px;color:#333;font-weight:400;line-height:20px;">365,70</div>
<div class="t" style="left:566px;width:600px;text-align:right;top:699px;font-size:13px;color:#808080;font-weight:400;line-height:20px;">530,00</div>
<div class="t" style="left:679px;width:600px;text-align:right;top:699px;font-size:13px;color:#e8112d;font-weight:400;line-height:20px;">-100,00</div>
<div style="position:absolute;left:24px;top:722px;width:1657px;height:1px;background:#e3e3e3"></div>
<svg style="position:absolute;left:54px;top:735px" width="10" height="5" viewBox="0 0 10 5"><rect x="0.5" y="0.5" width="9" height="4" fill="#f7dc5a" stroke="#cfa400" stroke-width="1"/><rect x="1.5" y="1.5" width="7" height="1" fill="#fff6b8"/></svg>
<div class="t" style="left:76px;top:728px;font-size:13px;color:#2a2a2a;font-weight:400;line-height:20px;letter-spacing:-0.087px">Жевательный табак Siberia Silver Slime X-Tremely Red 13г</div>
<div class="t" style="left:695px;top:728px;font-size:13px;color:#b8b8b8;font-weight:400;line-height:20px;letter-spacing:-0.1px">&lt;характе…</div>
<div class="t" style="left:245px;width:600px;text-align:right;top:728px;font-size:13px;color:#808080;font-weight:400;line-height:20px;">350,20</div>
<div class="t" style="left:421px;width:600px;text-align:right;top:728px;font-size:13px;color:#333;font-weight:400;line-height:20px;">350,20</div>
<div class="t" style="left:566px;width:600px;text-align:right;top:728px;font-size:13px;color:#808080;font-weight:400;line-height:20px;">510,00</div>
<div class="t" style="left:679px;width:600px;text-align:right;top:728px;font-size:13px;color:#e8112d;font-weight:400;line-height:20px;">-100,00</div>
<div style="position:absolute;left:24px;top:751px;width:1657px;height:1px;background:#e3e3e3"></div>
<svg style="position:absolute;left:54px;top:764px" width="10" height="5" viewBox="0 0 10 5"><rect x="0.5" y="0.5" width="9" height="4" fill="#f7dc5a" stroke="#cfa400" stroke-width="1"/><rect x="1.5" y="1.5" width="7" height="1" fill="#fff6b8"/></svg>
<div class="t" style="left:76px;top:757px;font-size:13px;color:#2a2a2a;font-weight:400;line-height:20px;letter-spacing:-0.05px">Жевательный табак Odens Tar Cold Dry 16г</div>
<div class="t" style="left:695px;top:757px;font-size:13px;color:#b8b8b8;font-weight:400;line-height:20px;letter-spacing:-0.1px">&lt;характе…</div>
<div class="t" style="left:245px;width:600px;text-align:right;top:757px;font-size:13px;color:#808080;font-weight:400;line-height:20px;">350,00</div>
<div class="t" style="left:308px;width:600px;text-align:right;top:757px;font-size:13px;color:#e8112d;font-weight:400;line-height:20px;">-2,89</div>
<div class="t" style="left:421px;width:600px;text-align:right;top:757px;font-size:13px;color:#1c7a1c;font-weight:400;line-height:20px;">339,90</div>
<div class="t" style="left:566px;width:600px;text-align:right;top:757px;font-size:13px;color:#808080;font-weight:400;line-height:20px;">510,00</div>
<div class="t" style="left:679px;width:600px;text-align:right;top:757px;font-size:13px;color:#e8112d;font-weight:400;line-height:20px;">-100,00</div>
<div style="position:absolute;left:1389px;top:317px;width:1px;height:462px;background:#bdbdbd"></div>
<div style="position:absolute;left:1515px;top:317px;width:1px;height:462px;background:#bdbdbd"></div>
<div style="position:absolute;left:1684px;top:279px;width:2px;height:476px;background:#d5d5d5;border-radius:2px 0 0 2px"></div>
<div style="position:absolute;left:1684px;top:279px;width:2px;height:322px;background:#9b9b9b;border-radius:2px 0 0 2px"></div>
<div style="position:absolute;left:1684px;top:267px;width:2px;height:1px;background:#9a9a9a"></div>
<div style="position:absolute;left:1685px;top:766px;width:1px;height:1px;background:#8a8a8a"></div>
<div class="t" style="left:22px;top:791px;font-size:13px;color:#333;font-weight:700;line-height:20px;letter-spacing:0.08px">Папиросы Богатыри Бленд №2 Ваниль</div>
<div class="t" style="left:283px;top:791px;font-size:13px;color:#333;font-weight:400;line-height:20px;">|</div>
<svg style="position:absolute;left:291px;top:788px" width="16" height="18" viewBox="0 0 16 18"><path d="M3.1 6.5V1.1H9.3L14.7 6.9L10 11.8" fill="#fff" stroke="#333" stroke-width="1.1"/><path d="M3.6 6.5L9.6 12.3L14.2 7L9.1 1.6H3.6Z" fill="#fff"/><path d="M3.1 6.5V1.1H9.3L14.7 6.9" fill="none" stroke="#333" stroke-width="1.1"/><circle cx="6.5" cy="4.4" r="1.1" fill="none" stroke="#333" stroke-width="0.9"/><path d="M2.3 8.3L4.3 10.3" stroke="#4f5a66" stroke-width="4.4"/><path d="M4.3 10.3L8.3 14.3" stroke="#4cb85a" stroke-width="4.4"/><path d="M9.9 12.7L6.7 15.9L11.4 17.4Z" fill="#f0b85a" stroke="#9a6a20" stroke-width="0.5"/></svg>
<div style="position:absolute;left:308px;top:793px;width:68px;height:15px;background:#c4c4c4;border-radius:7px"></div>
<div class="t" style="left:377px;top:791px;font-size:13px;color:#333;font-weight:400;line-height:20px;">Розничная цена [</div>
<div style="position:absolute;left:480px;top:792px;width:46px;height:16px;background:#c4c4c4;border-radius:8px"></div>
<div class="t" style="left:526px;top:791px;font-size:13px;color:#333;font-weight:400;line-height:20px;letter-spacing:-0.13px">РозничнаяЦена],</div>
<div class="t" style="left:1622px;top:789px;font-size:13px;color:#2d56c8;font-weight:400;line-height:20px;">Настроить...</div>
<div style="position:absolute;left:1622px;top:805px;width:64px;height:1px;background:#2d56c8"></div>
<div class="btn" style="left:22px;top:832px;width:283px;height:26px;"></div>
<div class="t" style="left:35px;top:835px;font-size:13px;color:#333;font-weight:700;line-height:20px;letter-spacing:-0.45px">&lt; Перейти к изменению состава видов цен</div>
<div class="t" style="left:22px;top:879px;font-size:13px;color:#4d4d4d;font-weight:400;line-height:20px;letter-spacing:-0.18px">Ответственный:</div>
<div style="position:absolute;left:121px;top:876px;width:290px;height:25px;border:1px solid #a0a0a0;border-radius:3px;background:#fff"></div>
<div style="position:absolute;left:368px;top:877px;width:1px;height:23px;background:#c0c0c0"></div>
<div style="position:absolute;left:389px;top:877px;width:1px;height:23px;background:#c0c0c0"></div>
<div class="t" style="left:125px;top:879px;font-size:13px;color:#333;font-weight:400;line-height:20px;letter-spacing:-0.15px">Администратор</div>
<svg style="position:absolute;left:375.5px;top:886px" width="7" height="4" viewBox="0 0 7 4"><path d="M0 0H6.5L3.25 3.5Z" fill="#444"/></svg>
<svg style="position:absolute;left:396px;top:882px" width="10" height="11" viewBox="0 0 10 11"><rect x="3.5" y="1.5" width="5" height="5" fill="none" stroke="#3a3a3a" stroke-width="1.1"/><path d="M2.8 4.5H1.5V9.5H6V8.3" fill="none" stroke="#3a3a3a" stroke-width="1.1"/></svg>
<svg style="position:absolute;left:0;top:0" width="1686" height="910" viewBox="0 0 1686 910"><rect x="928" y="104" width="294" height="71" rx="30" ry="13" fill="#fff" stroke="#ed1c24" stroke-width="8"/><path d="M1068 178L1012 322" stroke="#ed1c24" stroke-width="7" stroke-linecap="round"/><rect x="1362" y="116" width="233" height="32.5" rx="17" ry="7" fill="#fff" stroke="#ed1c24" stroke-width="8"/><path d="M1497 152L1487 253" stroke="#ed1c24" stroke-width="7"/><rect x="1236" y="200" width="144" height="29.5" rx="14" ry="6" fill="#fff" stroke="#ed1c24" stroke-width="8"/><path d="M1311 233L1346 294" stroke="#ed1c24" stroke-width="7" stroke-linecap="round"/><rect x="1388.5" y="255.5" width="124" height="60" fill="none" stroke="#ed1c24" stroke-width="5"/></svg>
<div class="t" style="left:956px;top:119px;font-size:17.3px;color:#111;font-weight:400;line-height:20px;letter-spacing:0">От новой цены относительно</div>
<div class="t" style="left:956px;top:142px;font-size:17.3px;color:#111;font-weight:400;line-height:20px;">цены установки&nbsp; расчитать %</div>
<div class="t" style="left:1377px;top:120px;font-size:17.3px;color:#111;font-weight:400;line-height:20px;">Доп колонка с % наценки</div>
<div class="t" style="left:1252px;top:204px;font-size:17.3px;color:#111;font-weight:400;line-height:20px;">цена продаж</div>
</body></html>
